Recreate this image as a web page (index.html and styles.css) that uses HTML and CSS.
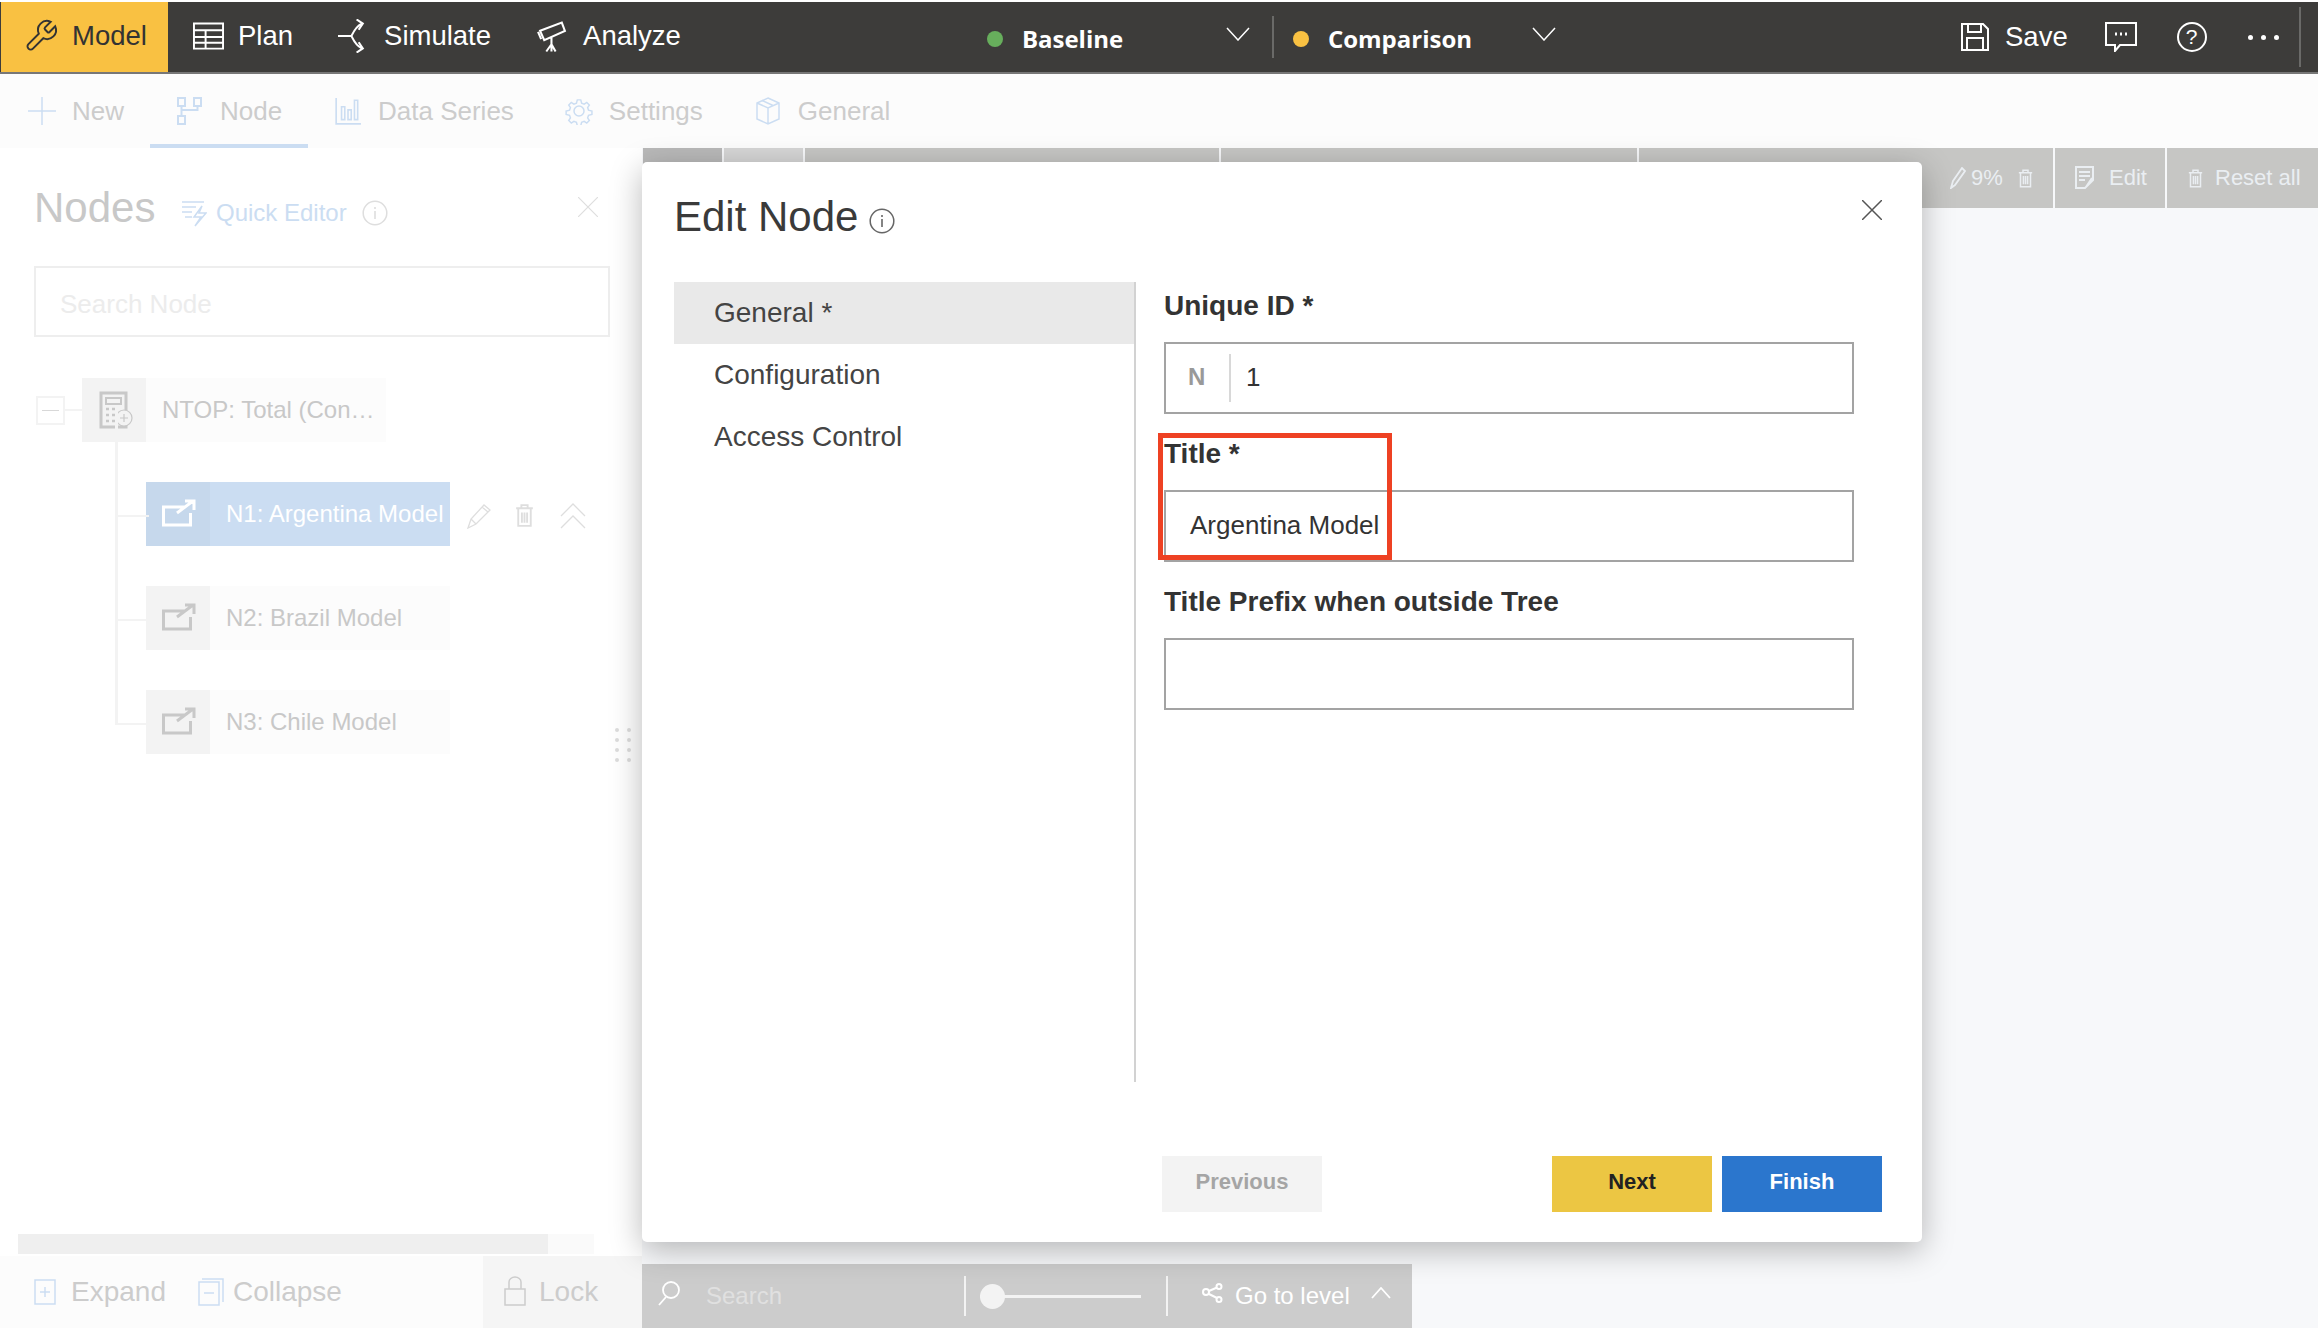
FILE: index.html
```html
<!DOCTYPE html>
<html lang="en">

<head>
    <meta charset="utf-8" />
    <title>Edit Node</title>
    <link rel="stylesheet" href="styles.css">
</head>

<body>
    <!-- shared icons -->
    <svg class="defs" width="0" height="0">
        <symbol id="iconTrash" viewBox="0 0 18 24"><path d="M1 5h16M3 5v17h12V5M6 5V2h6v3M6.500 9v10M9 9v10M11.500 9v10" fill="none" stroke="currentColor" stroke-width="1.800"/></symbol>
        <symbol id="iconInfo" viewBox="0 0 26 26"><circle cx="13" cy="13" r="11.800" fill="none" stroke="currentColor" stroke-width="1.500"/><path d="M13 11v8M13 7v2" stroke="currentColor" stroke-width="1.600"/></symbol>
        <symbol id="iconLeaf" viewBox="0 0 34 28"><path d="M23 8H1.500v18h27V14M15 14L31 2M23 2h9v9" fill="none" stroke="currentColor" stroke-width="3"/></symbol>
    </svg>

    <div class="topBar">
        <div class="topTab topTabActive">
            <svg class="topIcon wrenchIcon" viewBox="0 0 24 24"><path d="M14.700 6.300a1 1 0 0 0 0 1.400l1.600 1.600a1 1 0 0 0 1.400 0l3.770-3.770a6 6 0 0 1-7.940 7.940l-6.910 6.910a2.120 2.120 0 0 1-3-3l6.910-6.910a6 6 0 0 1 7.940-7.940l-3.760 3.760z" fill="none" stroke="currentColor" stroke-width="1.300"/></svg>
            Model
        </div>
        <div class="topTab">
            <svg class="topIcon" viewBox="0 0 32 28"><path d="M1 1h30v26H1zM1 8h30M1 15h30M1 21h30M13 8v19" fill="none" stroke="currentColor" stroke-width="2"/></svg>
            Plan
        </div>
        <div class="topTab topTabWide">
            <svg class="topIcon" viewBox="0 0 30 32"><path d="M0 16h13M13 16c2-4 4-9 10-12M13 16c2 4 4 9 10 12M18 0l6 4-4 6M18 32l6-4-4-6" fill="none" stroke="currentColor" stroke-width="2"/></svg>
            Simulate
        </div>
        <div class="topTab topTabWide topTabAnalyze">
            <svg class="topIcon" viewBox="0 0 30 32"><path d="M3 11l21-8 3 8-20 9zM14 17v7M14 24l-5 7M14 24l4 7M14 24v7M1 12l3 7" fill="none" stroke="currentColor" stroke-width="2"/></svg>
            Analyze
        </div>
        <div class="scenario scenarioBaseline">
            <span class="dot dotGreen"></span>
            <span class="scenarioName">Baseline</span>
            <svg class="chevron" viewBox="0 0 24 14"><path d="M1 1l11 12L23 1" fill="none" stroke="currentColor" stroke-width="1.500"/></svg>
        </div>
        <div class="scenario scenarioComparison">
            <span class="dot dotYellow"></span>
            <span class="scenarioName">Comparison</span>
            <svg class="chevron" viewBox="0 0 24 14"><path d="M1 1l11 12L23 1" fill="none" stroke="currentColor" stroke-width="1.500"/></svg>
        </div>
        <div class="topActions">
            <svg class="saveIcon" viewBox="0 0 28 28"><path d="M1 1h21l5 5v21H1zM7 1v8h13V1M6 27V15h16v12" fill="none" stroke="currentColor" stroke-width="2"/></svg>
            <span class="saveLabel">Save</span>
            <svg class="commentIcon" viewBox="0 0 32 30"><path d="M1 1h30v22H15l-5 6v-6H1z" fill="none" stroke="currentColor" stroke-width="2"/><path d="M10 12h2M15 12h2M20 12h2" stroke="currentColor" stroke-width="3"/></svg>
            <span class="helpIcon">?</span>
            <span class="moreIcon"><i></i><i></i><i></i></span>
        </div>
    </div>

    <div class="subBar">
        <div class="subItem subNew">
            <svg class="subIcon" viewBox="0 0 28 28"><path d="M14 0v28M0 14h28" stroke="currentColor" stroke-width="1.500"/></svg>
            <span>New</span>
        </div>
        <div class="subItem subNode">
            <svg class="subIcon" viewBox="0 0 26 28"><path d="M1 1h7v8H1zM17 1h7v8h-7zM1 19h7v8H1zM4.500 9v10M20.500 9v4H4.500" fill="none" stroke="currentColor" stroke-width="2"/></svg>
            <span>Node</span>
        </div>
        <div class="subItem subData">
            <svg class="subIcon" viewBox="0 0 24 26"><path d="M1 1v24h23M6 21V9h3v12zM12 21V12h3v9zM18 21V3h3v18z" fill="none" stroke="currentColor" stroke-width="1.500"/></svg>
            <span>Data Series</span>
        </div>
        <div class="subItem subSettings">
            <svg class="subIcon" viewBox="0 0 28 28"><circle cx="14" cy="14" r="5" fill="none" stroke="currentColor" stroke-width="1.500"/><path d="M12 1h4l1 4 3 1 3-2 3 3-2 3 1 3 4 1v4l-4 1-1 3 2 3-3 3-3-2-3 1-1 4h-4l-1-4-3-1-3 2-3-3 2-3-1-3-4-1v-4l4-1 1-3-2-3 3-3 3 2 3-1z" transform="translate(2 2) scale(.86)" fill="none" stroke="currentColor" stroke-width="1.700"/></svg>
            <span>Settings</span>
        </div>
        <div class="subItem subGeneral">
            <svg class="subIcon" viewBox="0 0 24 28"><path d="M12 1l11 5v16l-11 5-11-5V6zM1 6l11 5 11-5M12 11v16M6 3.500l11 5" fill="none" stroke="currentColor" stroke-width="1.500"/></svg>
            <span>General</span>
        </div>
    </div>

    <div class="main">
        <div class="sidebar">
            <div class="panel">
                <div class="panelHead">
                    <h2>Nodes</h2>
                    <svg class="quickIcon" viewBox="0 0 26 28"><path d="M1 3h22M1 8h14M1 13h10M4 18h7M21 7l-8 11h7l-6 9 11-13h-7z" fill="none" stroke="currentColor" stroke-width="1.500"/></svg>
                    <span class="quickLabel">Quick Editor</span>
                    <svg class="panelInfo"><use href="#iconInfo"/></svg>
                    <svg class="panelClose" viewBox="0 0 20 20"><path d="M0 0l20 20M20 0L0 20" stroke="currentColor" stroke-width="1.200"/></svg>
                </div>
                <div class="searchNode">Search Node</div>

                <div class="treeRoot">
                    <span class="expander"></span>
                    <span class="rootLine"></span>
                    <div class="node nodeRoot">
                        <span class="nodeIcon">
                            <svg class="calcIcon" viewBox="0 0 34 38"><path d="M2 2h25v34H2z" fill="none" stroke="currentColor" stroke-width="3"/><path d="M7 7h15v6H7z" fill="none" stroke="currentColor" stroke-width="2"/><path d="M7 18h3M13 18h3M7 24h3M13 24h3M7 30h3M13 30h3" stroke="currentColor" stroke-width="2.500"/><circle cx="25" cy="27" r="8" fill="#f3f3f3" stroke="currentColor" stroke-width="1.200"/><path d="M25 23v8M21 27h8" stroke="currentColor" stroke-width="1.200"/></svg>
                        </span>
                        <span class="nodeLabel">NTOP: Total (Con…</span>
                    </div>
                </div>
                <div class="treeChildren">
                    <div class="treeRow">
                        <div class="node nodeSelected">
                            <span class="nodeIcon"><svg class="leafIcon"><use href="#iconLeaf"/></svg></span>
                            <span class="nodeLabel">N1: Argentina Model</span>
                        </div>
                        <div class="nodeTools">
                            <svg class="toolPencil" viewBox="0 0 24 26"><path d="M1 25l3-9L17 2l6 5L9 21zM4 16l5 5M15 4l6 5" fill="none" stroke="currentColor" stroke-width="1.300"/></svg>
                            <svg class="toolTrash"><use href="#iconTrash"/></svg>
                            <svg class="toolChevrons" viewBox="0 0 26 26"><path d="M1 13L13 1l12 12M1 25l12-12 12 12" fill="none" stroke="currentColor" stroke-width="1.300"/></svg>
                        </div>
                    </div>
                    <div class="treeRow">
                        <div class="node">
                            <span class="nodeIcon"><svg class="leafIcon"><use href="#iconLeaf"/></svg></span>
                            <span class="nodeLabel">N2: Brazil Model</span>
                        </div>
                    </div>
                    <div class="treeRow">
                        <div class="node">
                            <span class="nodeIcon"><svg class="leafIcon"><use href="#iconLeaf"/></svg></span>
                            <span class="nodeLabel">N3: Chile Model</span>
                        </div>
                    </div>
                </div>
                <div class="dragHandle"><i></i><i></i><i></i><i></i><i></i><i></i><i></i><i></i></div>
            </div>

            <div class="scrollTrack"><div class="scrollThumb"></div></div>

            <div class="bottomLeft">
                <div class="bottomTools">
                    <svg class="boxIcon" viewBox="0 0 22 26"><path d="M1 1h20v24H1zM11 8v10M6 13h10" fill="none" stroke="currentColor" stroke-width="1.500"/></svg>
                    <span class="bottomLabel">Expand</span>
                    <svg class="boxIcon boxCollapse" viewBox="0 0 26 28"><path d="M1 4h20v23H1zM4 1h21v23M6 15h10" fill="none" stroke="currentColor" stroke-width="1.500"/></svg>
                    <span class="bottomLabel">Collapse</span>
                </div>
                <div class="bottomLock">
                    <svg class="lockIcon" viewBox="0 0 22 30"><path d="M1 13h20v16H1zM5 13V6a6 5 0 0 1 12 0v7" fill="none" stroke="currentColor" stroke-width="1.500"/></svg>
                    <span class="bottomLabel">Lock</span>
                </div>
            </div>
        </div>

        <div class="workspace">
            <div class="strip">
                <div class="stripCell stripDark"></div>
                <div class="stripCell stripLight"></div>
                <div class="stripCell stripWide1"></div>
                <div class="stripCell stripWide2"></div>
                <div class="stripCell stripPercent">
                    <svg class="stripPencil" viewBox="0 0 16 22"><path d="M1 21l2-7L12 1l3 3L5 18z" fill="none" stroke="currentColor" stroke-width="1.800"/></svg>
                    <span>9%</span>
                    <svg class="stripTrash"><use href="#iconTrash"/></svg>
                </div>
                <div class="stripCell stripEdit">
                    <svg class="stripNote" viewBox="0 0 20 24"><path d="M1 1h17v13l-8 8H1zM4 6h11M4 10h11M4 14h6M17 12l-6 9" fill="none" stroke="currentColor" stroke-width="2"/></svg>
                    <span>Edit</span>
                </div>
                <div class="stripCell stripReset">
                    <svg class="stripTrash"><use href="#iconTrash"/></svg>
                    <span>Reset all</span>
                </div>
            </div>

            <div class="viewToolbar">
                <svg class="viewSearchIcon" viewBox="0 0 24 26"><circle cx="14" cy="10" r="8" fill="none" stroke="currentColor" stroke-width="1.800"/><path d="M9 17L2 25" stroke="currentColor" stroke-width="1.800"/></svg>
                <span class="viewSearch">Search</span>
                <span class="viewSep"></span>
                <div class="slider"><span class="sliderKnob"></span></div>
                <span class="viewSep"></span>
                <svg class="shareIcon" viewBox="0 0 22 20"><circle cx="4" cy="9" r="3" fill="none" stroke="currentColor" stroke-width="2"/><circle cx="17" cy="3.500" r="2.500" fill="none" stroke="currentColor" stroke-width="2"/><circle cx="17" cy="16.500" r="2.500" fill="none" stroke="currentColor" stroke-width="2"/><path d="M7 8l8-3.500M7 11l8 4" stroke="currentColor" stroke-width="2"/></svg>
                <span class="goLevel">Go to level</span>
                <svg class="caretUp" viewBox="0 0 20 12"><path d="M1 11L10 1l9 10" fill="none" stroke="currentColor" stroke-width="1.800"/></svg>
            </div>
        </div>
    </div>

    <!-- Dialog over the page -->
    <div class="modal">
        <div class="modalHead">
            <h1>Edit Node</h1>
            <svg class="modalInfo"><use href="#iconInfo"/></svg>
            <svg class="modalClose" viewBox="0 0 20 20"><path d="M0 0l20 20M20 0L0 20" stroke="currentColor" stroke-width="1.500"/></svg>
        </div>
        <div class="modalBody">
            <ul class="modalMenu">
                <li class="modalMenuActive">General *</li>
                <li>Configuration</li>
                <li>Access Control</li>
            </ul>
            <div class="modalForm">
                <div class="field">
                    <label>Unique ID *</label>
                    <div class="fieldBox">
                        <span class="fieldPrefix">N</span>
                        <span class="fieldValue">1</span>
                    </div>
                </div>
                <div class="field">
                    <label>Title *</label>
                    <div class="fieldBox"><span class="fieldValue">Argentina Model</span></div>
                </div>
                <div class="field">
                    <label>Title Prefix when outside Tree</label>
                    <div class="fieldBox"></div>
                </div>
            </div>
        </div>
        <div class="modalFoot">
            <button class="btn btnPrevious">Previous</button>
            <button class="btn btnNext">Next</button>
            <button class="btn btnFinish">Finish</button>
        </div>
        <div class="highlightBox"></div>
    </div>
</body>

</html>
```

FILE: styles.css
```css
* {
    box-sizing: border-box;
}

html,
body {
    margin: 0;
    padding: 0;
}

body {
    width: 2318px;
    height: 1328px;
    overflow: hidden;
    position: relative;
    display: flex;
    flex-direction: column;
    padding-top: 2px;
    background-color: #fff;
    font-family: "Liberation Sans", Arial, sans-serif;
}

h1,
h2,
ul {
    margin: 0;
    padding: 0;
    font-weight: normal;
}

.defs {
    position: absolute;
}

/* Top bar */
.topBar {
    height: 72px;
    padding-left: 1px;
    display: flex;
    align-items: stretch;
    flex: none;
    background-color: #3d3c3a;
    border-bottom: 2px solid #777;
    color: #fff;
    font-size: 27.5px;
}

.topTab {
    display: flex;
    align-items: center;
    gap: 14px;
    padding: 0 0 2px 25px;
}

.topTabActive {
    width: 167px;
    padding-left: 22px;
    gap: 13px;
    background-color: #f9c142;
    color: #333;
}

.topTabWide {
    padding-left: 45px;
    gap: 15px;
}

.topTabAnalyze {
    padding-left: 46px;
}

.topIcon {
    width: 31px;
    height: 34px;
    flex: none;
}

.wrenchIcon {
    width: 36px;
    height: 36px;
}

.scenario {
    display: flex;
    align-items: center;
    height: 100%;
}

.scenarioBaseline {
    margin-left: 306px;
    width: 298px;
    border-right: 0;
}

.scenarioComparison {
    width: 300px;
    margin-left: -13px;
    padding-left: 21px;
    position: relative;
}

.scenarioComparison::before {
    content: "";
    position: absolute;
    left: 0;
    top: 14px;
    bottom: 14px;
    width: 2px;
    background-color: #6a6a68;
}

.dot {
    width: 16px;
    height: 16px;
    border-radius: 50%;
    margin-top: 4px;
    flex: none;
}

.dotGreen {
    background-color: #67ae5c;
}

.dotYellow {
    background-color: #f9c142;
}

.scenarioName {
    margin: 2px 0 0 19px;
    font-family: "Open Sans", sans-serif;
    font-size: 24px;
    font-weight: 700;
}

.scenarioBaseline .chevron {
    margin-left: 103px;
}

.scenarioComparison .chevron {
    margin-left: 60px;
}

.chevron {
    width: 24px;
    height: 14px;
    margin-bottom: 6px;
}

.topActions {
    margin-left: auto;
    width: 357px;
    display: flex;
    align-items: center;
    padding-left: 0;
}

.saveIcon {
    width: 28px;
    height: 28px;
}

.saveLabel {
    margin-left: 16px;
}

.commentIcon {
    width: 32px;
    height: 30px;
    margin-left: 37px;
}

.helpIcon {
    width: 30px;
    height: 30px;
    margin-left: 40px;
    border: 2px solid #fff;
    border-radius: 50%;
    display: flex;
    align-items: center;
    justify-content: center;
    font-size: 21px;
}

.moreIcon {
    margin-left: 41px;
    display: flex;
    gap: 8px;
    padding-right: 20px;
    height: 60px;
    align-items: center;
    border-right: 2px solid #6a6a68;
}

.moreIcon i {
    width: 5px;
    height: 5px;
    border-radius: 50%;
    background-color: #fff;
}

/* Secondary bar */
.subBar {
    height: 74px;
    flex: none;
    display: flex;
    background-color: #fcfcfc;
    color: #ccc;
    font-size: 26px;
}

.subItem {
    display: flex;
    align-items: center;
    gap: 16px;
}

.subIcon {
    color: #cbddf2;
    height: 28px;
    width: 28px;
    flex: none;
}

.subNew {
    margin-left: 28px;
}

.subNode {
    margin-left: 26px;
    width: 158px;
    padding: 4px 0 0 26px;
    border-bottom: 4px solid #cbddf2;
}

.subData {
    margin-left: 26px;
}

.subSettings {
    margin-left: 51px;
}

.subGeneral {
    margin-left: 51px;
}

/* Main area */
.main {
    flex: 1;
    display: flex;
    min-height: 0;
}

.sidebar {
    width: 642px;
    flex: none;
    display: flex;
    flex-direction: column;
}

.panel {
    flex: 1;
    padding-left: 34px;
    position: relative;
}

.panelHead {
    height: 48px;
    margin-top: 35px;
    display: flex;
    align-items: center;
}

.panelHead h2 {
    width: 147px;
    padding-top: 2px;
    font-size: 42px;
    color: #c8c8c8;
}

.quickIcon {
    width: 26px;
    height: 28px;
    margin-top: 12px;
    color: #cbddf2;
}

.quickLabel {
    margin: 12px 0 0 9px;
    color: #cbddf2;
    font-size: 24px;
}

.panelInfo {
    width: 26px;
    height: 26px;
    margin: 12px 0 0 15px;
    color: #dedede;
}

.panelClose {
    width: 20px;
    height: 20px;
    margin-left: 190px;
    color: #dedede;
}

.searchNode {
    width: 576px;
    height: 71px;
    margin-top: 35px;
    padding: 5px 0 0 24px;
    display: flex;
    align-items: center;
    border: 2px solid #eee;
    color: #ececec;
    font-size: 26px;
}

.treeRoot {
    display: flex;
    align-items: center;
    margin-top: 41px;
    height: 64px;
}

.expander {
    width: 29px;
    height: 29px;
    margin-left: 2px;
    border: 2px solid #f3f3f3;
    position: relative;
}

.expander::after {
    content: "";
    position: absolute;
    left: 4px;
    right: 4px;
    top: 12px;
    height: 1px;
    background-color: #d8d8d8;
}

.rootLine {
    width: 17px;
    height: 2px;
    background-color: #f3f3f3;
}

.node {
    width: 304px;
    height: 64px;
    display: flex;
    background-color: #fcfcfc;
    color: #c8c8c8;
    font-size: 24px;
}

.nodeIcon {
    width: 64px;
    display: flex;
    align-items: center;
    justify-content: center;
    background-color: #f3f3f3;
}

.nodeLabel {
    padding-left: 16px;
    display: flex;
    align-items: center;
    white-space: nowrap;
}

.nodeSelected {
    background-color: #cbddf2;
    color: #fff;
}

.nodeSelected .nodeIcon {
    background-color: #c6d8ec;
}

.calcIcon {
    width: 34px;
    height: 38px;
    margin-left: 4px;
    color: #c8c8c8;
}

.leafIcon {
    width: 34px;
    height: 28px;
    margin: -2px 0 0 1px;
}

.treeChildren {
    margin: 40px 0 0 112px;
    display: flex;
    flex-direction: column;
    gap: 40px;
}

.treeRow {
    height: 64px;
    display: flex;
    align-items: center;
    position: relative;
}

/* connectors of the tree */
.treeRow::before {
    content: "";
    position: absolute;
    left: -31px;
    top: -72px;
    width: 31px;
    height: 105px;
    border-left: 3px solid #f3f3f3;
    border-bottom: 2px solid #f3f3f3;
}

.nodeTools {
    display: flex;
    align-items: center;
    margin: 3px 0 0 17px;
    color: #dedede;
}

.toolPencil {
    width: 24px;
    height: 26px;
}

.toolTrash {
    width: 19px;
    height: 25px;
    margin-left: 24px;
}

.toolChevrons {
    width: 26px;
    height: 26px;
    margin-left: 26px;
}

.dragHandle {
    position: absolute;
    left: 615px;
    top: 580px;
    display: grid;
    grid-template-columns: 4px 4px;
    column-gap: 8px;
    row-gap: 6px;
}

.dragHandle i {
    height: 4px;
    border-radius: 50%;
    background-color: #ddd;
}

.scrollTrack {
    width: 576px;
    height: 20px;
    margin-left: 18px;
    background-color: #fafafa;
}

.scrollThumb {
    width: 530px;
    height: 100%;
    background-color: #efefef;
}

.bottomLeft {
    height: 72px;
    margin-top: 2px;
    flex: none;
    display: flex;
    color: #ccc;
    font-size: 28px;
}

.bottomTools {
    width: 483px;
    display: flex;
    align-items: center;
    padding-left: 34px;
    background-color: #fcfcfc;
}

.boxIcon {
    width: 22px;
    height: 26px;
    color: #cbddf2;
}

.boxCollapse {
    width: 26px;
    height: 28px;
    margin-left: 32px;
}

.bottomLabel {
    margin-left: 15px;
}

.boxCollapse + .bottomLabel {
    margin-left: 9px;
}

.bottomLock {
    flex: 1;
    display: flex;
    align-items: center;
    padding-left: 21px;
    background-color: #f5f5f5;
}

.lockIcon {
    width: 22px;
    height: 30px;
    margin-bottom: 3px;
}

.lockIcon + .bottomLabel {
    margin-left: 13px;
}

/* Workspace behind the dialog */
.workspace {
    flex: 1;
    display: flex;
    flex-direction: column;
    justify-content: space-between;
    background-color: #f7f8fa;
}

.strip {
    height: 60px;
    display: flex;
    gap: 2px;
    padding-left: 1px;
    color: #eaeef2;
    font-size: 22px;
}

.stripCell {
    background-color: #c6c6c4;
    display: flex;
    align-items: center;
}

.stripDark {
    width: 79px;
    background-color: #b9b9b9;
}

.stripLight {
    width: 79px;
    background-color: #d6d6d6;
}

.stripWide1 {
    width: 414px;
}

.stripWide2 {
    width: 416px;
}

.stripPercent {
    width: 414px;
    padding-left: 311px;
    gap: 5px;
}

.stripPencil {
    width: 16px;
    height: 22px;
}

.stripPercent .stripTrash {
    margin-left: 10px;
}

.stripTrash {
    width: 15px;
    height: 21px;
}

.stripEdit {
    width: 110px;
    padding-left: 20px;
    gap: 14px;
}

.stripNote {
    width: 20px;
    height: 24px;
}

.stripReset {
    flex: 1;
    padding-left: 21px;
    gap: 12px;
}

.viewToolbar {
    width: 770px;
    height: 64px;
    display: flex;
    align-items: center;
    background-color: #ccc;
    color: #fff;
}

.viewSearchIcon {
    width: 24px;
    height: 26px;
    margin: 0 0 6px 15px;
}

.viewSearch {
    width: 283px;
    padding-left: 25px;
    color: #e0e0e0;
    font-size: 24px;
}

.viewSep {
    width: 2px;
    height: 40px;
    background-color: #f3f3f3;
}

.slider {
    width: 161px;
    height: 3px;
    margin: 0 25px 0 14px;
    display: flex;
    align-items: center;
    background-color: #f3f3f3;
}

.sliderKnob {
    width: 25px;
    height: 25px;
    border-radius: 50%;
    background-color: #f3f3f3;
}

.shareIcon {
    width: 22px;
    height: 20px;
    margin: 0 0 6px 34px;
}

.goLevel {
    margin-left: 11px;
    font-size: 24px;
}

.caretUp {
    width: 20px;
    height: 12px;
    margin: 0 0 6px 21px;
}

/* Dialog */
.modal {
    position: absolute;
    left: 642px;
    top: 162px;
    width: 1280px;
    height: 1080px;
    display: flex;
    flex-direction: column;
    background-color: #fff;
    border-radius: 5px;
    box-shadow: 0 8px 32px rgba(0, 0, 0, 0.28);
}

.modalHead {
    height: 120px;
    padding: 0 0 10px 32px;
    display: flex;
    align-items: center;
    color: #3a3a3a;
}

.modalHead h1 {
    font-size: 42px;
    font-weight: normal;
}

.modalInfo {
    width: 26px;
    height: 26px;
    margin: 8px 0 0 11px;
    color: #666;
}

.modalClose {
    width: 20px;
    height: 20px;
    margin: -14px 40px 0 auto;
    color: #555;
}

.modalBody {
    height: 800px;
    flex: none;
    display: flex;
}

.modalMenu {
    width: 462px;
    margin-left: 32px;
    list-style: none;
    border-right: 2px solid #d2d2d2;
    color: #444;
    font-size: 28px;
}

.modalMenu li {
    height: 62px;
    padding-left: 40px;
    display: flex;
    align-items: center;
}

.modalMenuActive {
    background-color: #e9e9e9;
}

.modalForm {
    padding-left: 28px;
    width: 718px;
}

.field label {
    height: 48px;
    margin-bottom: 12px;
    display: flex;
    align-items: center;
    color: #333;
    font-size: 28px;
    font-weight: 700;
}

.fieldBox {
    height: 72px;
    margin-bottom: 16px;
    display: flex;
    align-items: center;
    padding: 0 0 2px 24px;
    border: 2px solid #a3a3a3;
    color: #333;
    font-size: 26px;
}

.fieldPrefix {
    width: 43px;
    margin: 2px 0 0 -2px;
    height: 48px;
    padding-bottom: 2px;
    display: flex;
    align-items: center;
    border-right: 2px solid #d8d8d8;
    color: #999;
    font-size: 24px;
    font-weight: 700;
}

.fieldPrefix + .fieldValue {
    margin-left: 15px;
}

.modalFoot {
    display: flex;
    margin-top: 74px;
    padding: 0 40px 0 520px;
    gap: 10px;
}

.btn {
    width: 160px;
    height: 56px;
    border: 0;
    padding: 0 0 4px;
    font-family: "Liberation Sans", Arial, sans-serif;
    font-size: 22px;
    font-weight: 700;
}

.btnPrevious {
    margin-right: auto;
    background-color: #f3f3f3;
    color: #a5a5a5;
}

.btnNext {
    background-color: #ecc643;
    color: #222;
}

.btnFinish {
    background-color: #2b76cd;
    color: #fff;
}

.highlightBox {
    position: absolute;
    left: 516px;
    top: 271px;
    width: 234px;
    height: 127px;
    border: 5px solid #ee4123;
}
```
